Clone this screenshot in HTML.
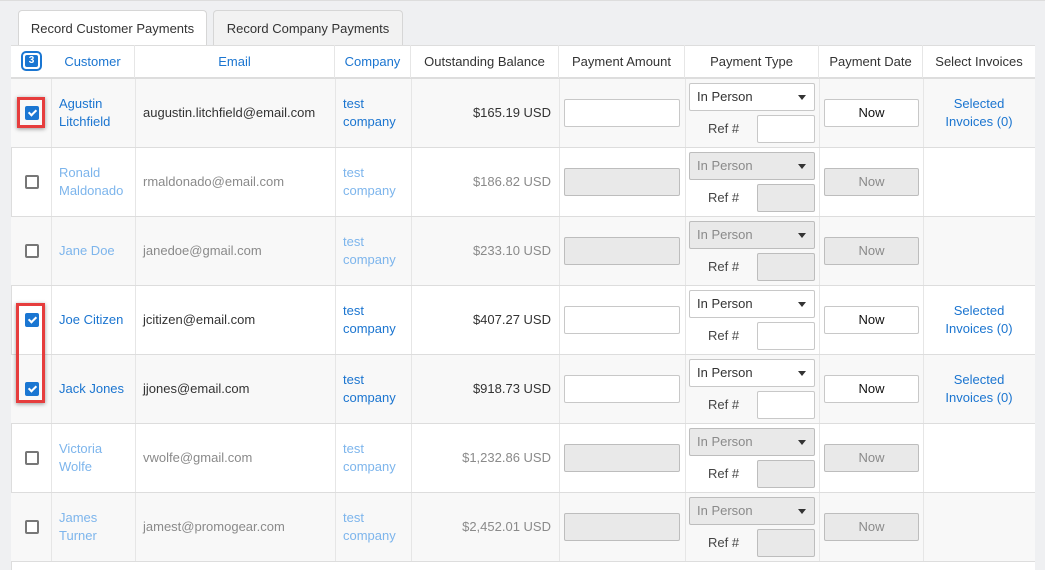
<!DOCTYPE html>
<html><head><meta charset="utf-8"><style>
*{box-sizing:border-box;margin:0;padding:0}
body{width:1045px;height:570px;overflow:hidden;background:#eff0f2;font-family:"Liberation Sans",Arial,sans-serif;font-size:13px;color:#333;position:relative}
.a{position:absolute}
.tab{position:absolute;top:10px;height:35px;border:1px solid #d6d6d6;border-bottom:none;border-radius:4px 4px 0 0;text-align:center;line-height:35px;font-size:13px;color:#333}
.panel{position:absolute;left:11px;top:45px;width:1024px;height:525px;background:#fff;border-left:1px solid #ddd}
.h{position:absolute;top:45px;height:33px;line-height:33px;text-align:center;font-size:13px;border-right:1px solid #e6e6e6}
.row{position:absolute;left:11px;width:1024px;height:69px;border-top:1px solid #ddd}
.row.g{background:#f8f8f8}
.vl{position:absolute;top:0;bottom:0;width:1px;background:#e6e6e6}
.t{position:absolute;line-height:18px}
.lk{color:#1b75d0}.d .lk{color:#7db5ec}
.d .tx{color:#8a8a8a}
.cb{position:absolute;left:14px;top:27px;width:14px;height:14px;border:2px solid #777;border-radius:2px;background:#fff}
.cb.on{background:#1a76d2;border-color:#1a76d2}
.cb.on:after{content:"";position:absolute;left:3px;top:0px;width:3px;height:6px;border:solid #fff;border-width:0 2px 2px 0;transform:rotate(45deg)}
.inp{position:absolute;border:1px solid #c8c8c8;border-radius:2px;background:#fff}
.d .inp{background:#e9e9e9;border-color:#bdbdbd}
.sel{position:absolute;left:678px;top:4px;width:126px;height:28px;border:1px solid #c8c8c8;border-radius:2px;background:#fff;padding-left:7px;line-height:26px}
.d .sel{background:#e9e9e9;border-color:#bdbdbd;color:#8a8a8a}
.sel:after{content:"";position:absolute;right:8px;top:11px;border:4px solid transparent;border-top:5px solid #333;border-bottom:0}
.now{position:absolute;left:813px;top:20px;width:95px;height:28px;border:1px solid #c8c8c8;border-radius:2px;background:#fff;text-align:center;line-height:26px;color:#111}
.d .now{background:#e9e9e9;border-color:#bdbdbd;color:#8a8a8a}
.ref{position:absolute;left:697px;top:41px;line-height:18px;color:#444}
.red{position:absolute;border:3px solid #e63d3d;box-shadow:0 1px 4px rgba(0,0,0,.4)}
</style></head><body>
<div class="a" style="left:0;top:0;width:1045px;height:1px;background:#ddd"></div>
<div class="tab" style="left:18px;width:189px;background:#fff;height:36px">Record Customer Payments</div>
<div class="tab" style="left:213px;width:190px;background:#f2f2f2">Record Company Payments</div>
<div class="panel"></div>
<div class="a" style="left:11px;top:45px;width:1024px;height:33px;background:#fff;border-bottom:1px solid #ddd;border-top:1px solid #ddd"></div>
<div class="a" style="left:21px;top:51px;width:21px;height:20px;border:2px solid #1a76d2;border-radius:5px;"><div style="position:absolute;left:2px;top:2px;width:13px;height:12px;background:#1a76d2;border-radius:2px;color:#fff;font-size:10px;font-weight:bold;text-align:center;line-height:12px">3</div></div>
<div class="h lk" style="left:51px;width:84px">Customer</div>
<div class="h lk" style="left:135px;width:200px">Email</div>
<div class="h lk" style="left:335px;width:76px">Company</div>
<div class="h" style="left:411px;width:148px">Outstanding Balance</div>
<div class="h" style="left:559px;width:126px">Payment Amount</div>
<div class="h" style="left:685px;width:134px">Payment Type</div>
<div class="h" style="left:819px;width:104px">Payment Date</div>
<div class="h" style="left:923px;width:112px;border:none">Select Invoices</div>

<div class="row g" style="top:78px"><div class="vl" style="left:40px"></div><div class="vl" style="left:124px"></div><div class="vl" style="left:324px"></div><div class="vl" style="left:400px"></div><div class="vl" style="left:548px"></div><div class="vl" style="left:674px"></div><div class="vl" style="left:808px"></div><div class="vl" style="left:912px"></div>
<div class="cb on"></div><div class="t lk" style="left:48px;top:16px">Agustin<br>Litchfield</div><div class="t tx" style="left:132px;top:25px">augustin.litchfield@email.com</div><div class="t lk" style="left:332px;top:16px">test<br>company</div><div class="t tx" style="right:484px;top:25px">$165.19 USD</div>
<div class="inp" style="left:553px;top:20px;width:116px;height:28px"></div><div class="sel">In Person</div><div class="ref">Ref #</div><div class="inp" style="left:746px;top:36px;width:58px;height:28px"></div><div class="now">Now</div><div class="t lk" style="left:912px;width:112px;text-align:center;top:16px">Selected<br>Invoices (0)</div></div>

<div class="row d" style="top:147px"><div class="vl" style="left:40px"></div><div class="vl" style="left:124px"></div><div class="vl" style="left:324px"></div><div class="vl" style="left:400px"></div><div class="vl" style="left:548px"></div><div class="vl" style="left:674px"></div><div class="vl" style="left:808px"></div><div class="vl" style="left:912px"></div>
<div class="cb"></div><div class="t lk" style="left:48px;top:16px">Ronald<br>Maldonado</div><div class="t tx" style="left:132px;top:25px">rmaldonado@email.com</div><div class="t lk" style="left:332px;top:16px">test<br>company</div><div class="t tx" style="right:484px;top:25px">$186.82 USD</div>
<div class="inp" style="left:553px;top:20px;width:116px;height:28px"></div><div class="sel">In Person</div><div class="ref">Ref #</div><div class="inp" style="left:746px;top:36px;width:58px;height:28px"></div><div class="now">Now</div></div>

<div class="row g d" style="top:216px"><div class="vl" style="left:40px"></div><div class="vl" style="left:124px"></div><div class="vl" style="left:324px"></div><div class="vl" style="left:400px"></div><div class="vl" style="left:548px"></div><div class="vl" style="left:674px"></div><div class="vl" style="left:808px"></div><div class="vl" style="left:912px"></div>
<div class="cb"></div><div class="t lk" style="left:48px;top:25px">Jane Doe</div><div class="t tx" style="left:132px;top:25px">janedoe@gmail.com</div><div class="t lk" style="left:332px;top:16px">test<br>company</div><div class="t tx" style="right:484px;top:25px">$233.10 USD</div>
<div class="inp" style="left:553px;top:20px;width:116px;height:28px"></div><div class="sel">In Person</div><div class="ref">Ref #</div><div class="inp" style="left:746px;top:36px;width:58px;height:28px"></div><div class="now">Now</div></div>

<div class="row" style="top:285px"><div class="vl" style="left:40px"></div><div class="vl" style="left:124px"></div><div class="vl" style="left:324px"></div><div class="vl" style="left:400px"></div><div class="vl" style="left:548px"></div><div class="vl" style="left:674px"></div><div class="vl" style="left:808px"></div><div class="vl" style="left:912px"></div>
<div class="cb on"></div><div class="t lk" style="left:48px;top:25px">Joe Citizen</div><div class="t tx" style="left:132px;top:25px">jcitizen@email.com</div><div class="t lk" style="left:332px;top:16px">test<br>company</div><div class="t tx" style="right:484px;top:25px">$407.27 USD</div>
<div class="inp" style="left:553px;top:20px;width:116px;height:28px"></div><div class="sel">In Person</div><div class="ref">Ref #</div><div class="inp" style="left:746px;top:36px;width:58px;height:28px"></div><div class="now">Now</div><div class="t lk" style="left:912px;width:112px;text-align:center;top:16px">Selected<br>Invoices (0)</div></div>

<div class="row g" style="top:354px"><div class="vl" style="left:40px"></div><div class="vl" style="left:124px"></div><div class="vl" style="left:324px"></div><div class="vl" style="left:400px"></div><div class="vl" style="left:548px"></div><div class="vl" style="left:674px"></div><div class="vl" style="left:808px"></div><div class="vl" style="left:912px"></div>
<div class="cb on"></div><div class="t lk" style="left:48px;top:25px">Jack Jones</div><div class="t tx" style="left:132px;top:25px">jjones@email.com</div><div class="t lk" style="left:332px;top:16px">test<br>company</div><div class="t tx" style="right:484px;top:25px">$918.73 USD</div>
<div class="inp" style="left:553px;top:20px;width:116px;height:28px"></div><div class="sel">In Person</div><div class="ref">Ref #</div><div class="inp" style="left:746px;top:36px;width:58px;height:28px"></div><div class="now">Now</div><div class="t lk" style="left:912px;width:112px;text-align:center;top:16px">Selected<br>Invoices (0)</div></div>

<div class="row d" style="top:423px"><div class="vl" style="left:40px"></div><div class="vl" style="left:124px"></div><div class="vl" style="left:324px"></div><div class="vl" style="left:400px"></div><div class="vl" style="left:548px"></div><div class="vl" style="left:674px"></div><div class="vl" style="left:808px"></div><div class="vl" style="left:912px"></div>
<div class="cb"></div><div class="t lk" style="left:48px;top:16px">Victoria<br>Wolfe</div><div class="t tx" style="left:132px;top:25px">vwolfe@gmail.com</div><div class="t lk" style="left:332px;top:16px">test<br>company</div><div class="t tx" style="right:484px;top:25px">$1,232.86 USD</div>
<div class="inp" style="left:553px;top:20px;width:116px;height:28px"></div><div class="sel">In Person</div><div class="ref">Ref #</div><div class="inp" style="left:746px;top:36px;width:58px;height:28px"></div><div class="now">Now</div></div>

<div class="row g d" style="top:492px;border-bottom:1px solid #ddd;height:70px"><div class="vl" style="left:40px"></div><div class="vl" style="left:124px"></div><div class="vl" style="left:324px"></div><div class="vl" style="left:400px"></div><div class="vl" style="left:548px"></div><div class="vl" style="left:674px"></div><div class="vl" style="left:808px"></div><div class="vl" style="left:912px"></div>
<div class="cb"></div><div class="t lk" style="left:48px;top:16px">James<br>Turner</div><div class="t tx" style="left:132px;top:25px">jamest@promogear.com</div><div class="t lk" style="left:332px;top:16px">test<br>company</div><div class="t tx" style="right:484px;top:25px">$2,452.01 USD</div>
<div class="inp" style="left:553px;top:20px;width:116px;height:28px"></div><div class="sel">In Person</div><div class="ref">Ref #</div><div class="inp" style="left:746px;top:36px;width:58px;height:28px"></div><div class="now">Now</div></div>

<div class="red" style="left:17px;top:97px;width:28px;height:31px"></div>
<div class="red" style="left:16px;top:303px;width:29px;height:100px"></div>
</body></html>
